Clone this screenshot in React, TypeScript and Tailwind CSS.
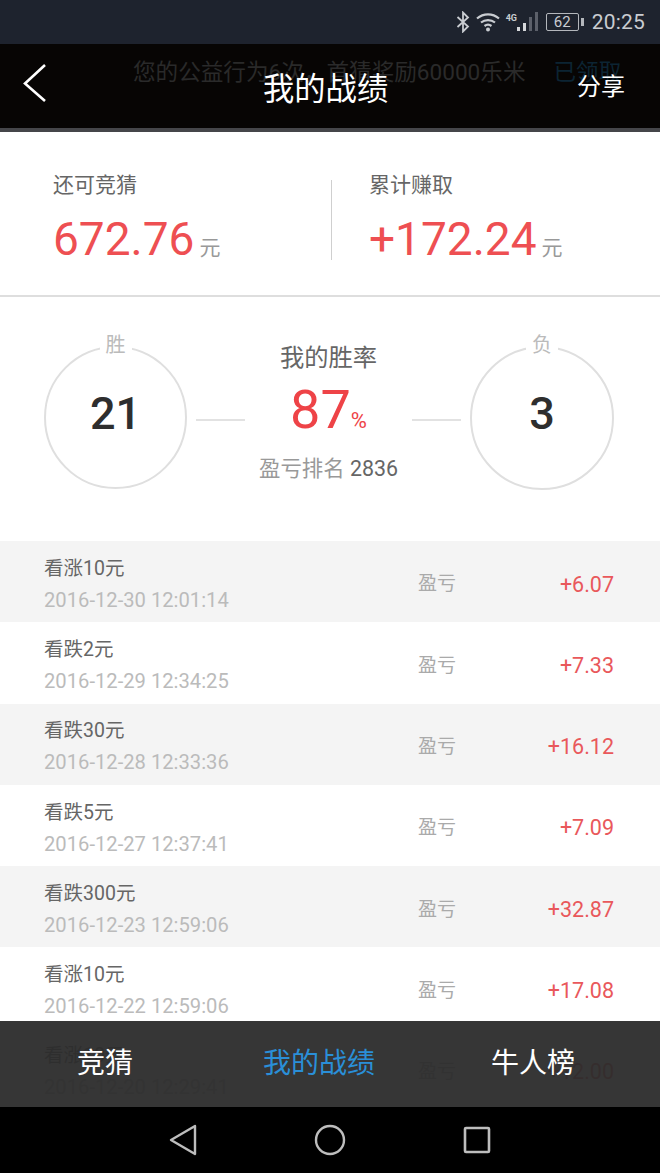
import { Fragment } from 'react';

const records = [
  { title: '看涨10元', time: '2016-12-30 12:01:14', profit: '+6.07' },
  { title: '看跌2元', time: '2016-12-29 12:34:25', profit: '+7.33' },
  { title: '看跌30元', time: '2016-12-28 12:33:36', profit: '+16.12' },
  { title: '看跌5元', time: '2016-12-27 12:37:41', profit: '+7.09' },
  { title: '看跌300元', time: '2016-12-23 12:59:06', profit: '+32.87' },
  { title: '看涨10元', time: '2016-12-22 12:59:06', profit: '+17.08' },
  { title: '看涨10元', time: '2016-12-20 12:29:41', profit: '+12.00' },
];

const fontStack = "font-['Roboto','Noto_Sans_CJK_SC',sans-serif]";

function StatusBar() {
  return (
    <div className="flex h-[44px] items-center justify-end bg-[#1e232e] pr-[15px] text-[#c9ccd1]">
      <svg width="14" height="22" viewBox="0 0 14 22" fill="none" stroke="currentColor" strokeWidth="1.8" className="mr-[6px]">
        <path d="M1.500 6 12 15.500 7 20.500V1.500L12 6.500 1.500 16" />
      </svg>
      <svg width="24" height="20" viewBox="0 0 24 20" fill="none" stroke="currentColor" strokeWidth="2.200" className="mr-[6px]">
        <path d="M1 6.500c6.500-5.500 15.500-5.500 22 0" />
        <path d="M5 10.500c4-3.300 10-3.300 14 0" />
        <path d="M8.500 14c2-1.500 5-1.500 7 0" />
        <circle cx="12" cy="17.500" r="2" fill="currentColor" stroke="none" />
      </svg>
      <div className="relative mr-[6px] h-[24px] w-[34px]">
        <span className="absolute left-0 top-[3px] text-[9px] font-bold leading-[10px]">4G</span>
        <svg width="34" height="24" viewBox="0 0 34 24" className="absolute left-0 top-0">
          <rect x="11" y="17" width="3" height="4" fill="#d5d7da" />
          <rect x="17" y="13" width="3" height="8" fill="#d5d7da" />
          <rect x="23" y="7" width="3" height="14" fill="#5c606a" />
          <rect x="29" y="2" width="3" height="19" fill="#5c606a" />
        </svg>
      </div>
      <div className="flex h-[18px] w-[33px] items-center justify-center rounded-[2px] border border-[#b4b7bc] text-[15px] leading-none">
        62
      </div>
      <div className="ml-[2px] mr-[8px] h-[8px] w-[3px] bg-[#b4b7bc]" />
      <span className="text-[21px] leading-none tracking-[0.2px]">20:25</span>
    </div>
  );
}

function Header() {
  return (
    <div className="relative flex h-[88px] items-center justify-between border-b-[4px] border-[#45464a] bg-[#070504] pb-[2px] pl-[22px] pr-[35px]">
      <div className="absolute left-[133px] top-[14px] flex text-[22.600px] leading-[30px] text-[#2a2a2a]">
        <span>您的公益行为6次，首猜奖励60000乐米</span>
        <span className="ml-[28px] text-[#0c2433]">已领取</span>
      </div>
      <svg width="26" height="40" viewBox="0 0 26 40" fill="none" stroke="#fff" strokeWidth="2.600" className="relative mt-[-6px]">
        <path d="M23 3 3 21.500 23 39" />
      </svg>
      <span className="absolute left-[263px] top-[24px] text-[31.300px] leading-[44px] text-white">我的战绩</span>
      <span className="relative mt-[4px] text-[24px] leading-[32px] text-white">分享</span>
    </div>
  );
}

function Summary() {
  return (
    <div className="flex h-[165px] border-b-2 border-[#dedede] bg-white">
      <div className="w-[331px] pl-[53px] pt-[38px]">
        <div className="text-[21px] leading-[30px] text-[#666]">还可竞猜</div>
        <div className="mt-[11px] flex items-baseline text-[#ee4f52]">
          <span className="text-[46px] leading-[56px]">672.76</span>
          <span className="ml-[5px] text-[21px] text-[#999]">元</span>
        </div>
      </div>
      <div className="mt-[48px] h-[80px] w-[1px] bg-[#cfcfcf]" />
      <div className="pl-[37px] pt-[38px]">
        <div className="text-[21px] leading-[30px] text-[#666]">累计赚取</div>
        <div className="mt-[11px] flex items-baseline text-[#ee4f52]">
          <span className="text-[46px] leading-[56px]">+172.24</span>
          <span className="ml-[5px] text-[21px] text-[#999]">元</span>
        </div>
      </div>
    </div>
  );
}

function Ring({ label, value, className }: { label: string; value: string; className: string }) {
  return (
    <div className={`relative flex items-center justify-center rounded-full border-2 border-[#dfdfdf] pb-[9px] ${className}`}>
      <span className="absolute left-1/2 top-[-17px] -translate-x-1/2 bg-white px-[6px] text-[20px] leading-[28px] text-[#bbb]">
        {label}
      </span>
      <span className="text-[45px] font-medium leading-none text-[#2e2e2e]">{value}</span>
    </div>
  );
}

function WinRate() {
  return (
    <div className="flex h-[244px] items-start justify-between bg-white pl-[44px] pr-[46px] pt-[49px]">
      <Ring label="胜" value="21" className="size-[143px]" />
      <div className="mx-[9px] mt-[73px] h-[2px] w-[49px] bg-[#e2e2e2]" />
      <div className="flex flex-1 flex-col items-center">
        <div className="mt-[-5px] text-[24.300px] leading-[34px] text-[#666]">我的胜率</div>
        <div className="mt-[3px] flex items-baseline text-[#ee4347]">
          <span className="text-[54px] leading-[64px]">87</span>
          <span className="text-[22px]">%</span>
        </div>
        <div className="mt-[12px] whitespace-nowrap text-[21.400px] leading-[30px] text-[#999]">
          盈亏排名 <span className="text-[#666]">2836</span>
        </div>
      </div>
      <div className="mx-[9px] mt-[73px] h-[2px] w-[49px] bg-[#e2e2e2]" />
      <Ring label="负" value="3" className="size-[144px]" />
    </div>
  );
}

function RecordList() {
  return (
    <div className="flex flex-col">
      {records.map((item, idx) => (
        <Fragment key={item.time}>
          <div
            className={`flex h-[81.300px] shrink-0 items-center pl-[44px] pr-[46px] ${
              idx % 2 === 0 ? 'bg-[#f4f4f4]' : 'bg-white'
            }`}
          >
            <div className="w-[374px] pt-[5px]">
              <div className="mt-[-1px] text-[19.500px] leading-[28px] text-[#666]">{item.title}</div>
              <div className="mt-[4px] text-[20.200px] leading-[26px] text-[#bbb]">{item.time}</div>
            </div>
            <span className="pt-[6px] text-[19px] text-[#aaa]">盈亏</span>
            <span className="ml-auto pt-[6px] text-[21.500px] text-[#e9585b]">{item.profit}</span>
          </div>
        </Fragment>
      ))}
    </div>
  );
}

function TabBar() {
  return (
    <div className="absolute bottom-[66px] left-0 right-0 flex h-[86px] items-center bg-[#2b2b2b]/95 pb-[1px] text-[28px] leading-[40px] text-white">
      <span className="ml-[77px]">竞猜</span>
      <span className="ml-[130px] text-[#2a8fd8]">我的战绩</span>
      <span className="ml-[116px]">牛人榜</span>
    </div>
  );
}

function NavBar() {
  return (
    <div className="absolute bottom-0 left-0 right-0 flex h-[66px] items-center justify-center gap-[117px] bg-black pb-[1px] text-[#bdbdbd]">
      <svg width="28" height="34" viewBox="0 0 28 34" fill="none" stroke="currentColor" strokeWidth="2.400" strokeLinejoin="round">
        <path d="M26 3 2 17l24 14z" />
      </svg>
      <svg width="32" height="32" viewBox="0 0 32 32" fill="none" stroke="currentColor" strokeWidth="2.400">
        <circle cx="16" cy="16" r="14" />
      </svg>
      <svg width="28" height="28" viewBox="0 0 28 28" fill="none" stroke="currentColor" strokeWidth="2.600">
        <rect x="2" y="2" width="24" height="24" rx="1" />
      </svg>
    </div>
  );
}

export default function App() {
  return (
    <div className={`relative h-[1173px] w-[660px] overflow-hidden bg-white ${fontStack}`}>
      <StatusBar />
      <Header />
      <Summary />
      <WinRate />
      <RecordList />
      <TabBar />
      <NavBar />
    </div>
  );
}
